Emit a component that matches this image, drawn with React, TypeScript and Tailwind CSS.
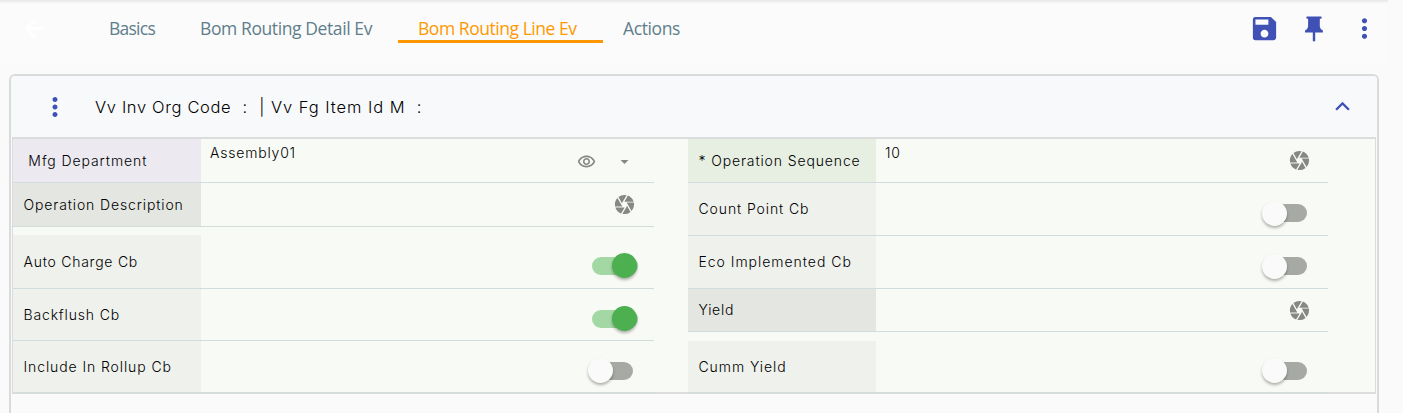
import React from "react";
import { MdArrowBack, MdArrowDropDown, MdCamera, MdKeyboardArrowUp, MdMoreVert, MdOutlineRemoveRedEye, MdSave } from "react-icons/md";

function Pin() {
  return (
    <svg width="18" height="26" viewBox="0 0 18 26" fill="#3f51b5">
      <path d="M2 0.5h14q.7 0 .7 1.1t-.7 1.2h-1.2v7.6q.3 2.9 3.1 4.2v2h-7.7v8.2l-1.2 1-1.2-1v-8.2H0v-2q2.8-1.3 3.1-4.2V2.8H2q-.7-.1-.7-1.2T2 .5z" />
    </svg>
  );
}

function Toggle({ on }: { on?: boolean }) {
  return (
    <div className={on ? "mt-[8px] mr-[17px] flex h-[26px] w-[45px] items-center justify-end" : "mt-[8px] mr-[21px] flex h-[26px] w-[45px] items-center"}>
      {on ? (
        <>
          <div className="-mr-[26px] h-[18px] w-[46px] shrink-0 rounded-full bg-[#a3d7a4]" />
          <div className="relative h-[25px] w-[25px] shrink-0 rounded-full bg-[#4caf50] shadow-[0_2px_3px_rgba(0,0,0,0.3)]" />
        </>
      ) : (
        <>
          <div className="relative h-[25px] w-[25px] shrink-0 rounded-full bg-[#fafafa] shadow-[0_2px_3px_rgba(0,0,0,0.3)]" />
          <div className="-ml-[13px] h-[18px] w-[33px] shrink-0 rounded-r-full bg-[#a7a9a5]" />
        </>
      )}
    </div>
  );
}

type RowProps = { label: string; size: string; tone: string; text: string; value?: string; children?: React.ReactNode };

function Row({ label, size, tone, text, value, children }: RowProps) {
  return (
    <div className={`flex border-b border-[#d3dcdc] ${size}`}>
      <div className={`flex w-[188px] shrink-0 items-center pl-[10.5px] ${tone}`}>
        <span className={`text-[14px] leading-5 whitespace-pre ${text}`}>{label}</span>
      </div>
      <div className="flex flex-1 items-center justify-between">
        <span className="self-start pt-1 pl-[9px] text-[14px] leading-5 tracking-[0.8px]">{value}</span>
        {children}
      </div>
    </div>
  );
}

const camera = <MdCamera size={23} className="mr-[17px] text-[#868884]" />;

export default function App() {
  return (
    <div className="h-[413px] overflow-hidden bg-[#fafafa] font-['Inter',sans-serif] font-light text-black">
      <header className="flex h-[64px] w-[1388px] items-center bg-[#fbfbfb] pb-[7px] font-['Open_Sans',sans-serif] font-normal shadow-[inset_0_3px_2px_-1px_#e9e9e9]">
        <MdArrowBack size={29} className="ml-[20px] text-white" />
        <nav className="ml-[60px] flex text-[17.5px] leading-6 text-[#607d8b]">
          <span className="w-[91px] tracking-[-0.75px]">Basics</span>
          <span className="w-[198px] tracking-[-0.4px] whitespace-nowrap">Bom Routing Detail Ev</span>
          <span className="-mb-[2px] w-[205px] border-b-[3px] border-[#ff9800] pl-[20px] tracking-[-0.45px] whitespace-nowrap text-[#ff9800]">Bom Routing Line Ev</span>
          <span className="pl-[20px] tracking-[-0.4px]">Actions</span>
        </nav>
        <div className="ml-auto flex items-center text-[#3f51b5]">
          <MdSave size={31} className="mr-[25px]" />
          <Pin />
          <MdMoreVert size={31} className="mr-[8px] ml-[26px]" />
        </div>
      </header>
      <main className="mt-[10px] ml-[9px] h-[350px] w-[1370px] rounded-t-[6px] border-x-2 border-t-2 border-[#d9dbdb]">
        <div className="flex h-[61px] items-center rounded-t-[4px] bg-[#f8f9fb]">
          <MdMoreVert size={30} className="ml-[29px] text-[#3f51b5]" />
          <h1 className="ml-[25px] text-[16.5px] leading-6 font-light whitespace-pre">
            <span className="tracking-[0.65px]">Vv Inv Org Code</span>
            <span className="tracking-[0.95px]">{"  :  | "}</span>
            <span className="tracking-[0.95px]">{"Vv Fg Item Id M  :"}</span>
          </h1>
          <MdKeyboardArrowUp size={29} className="mr-[20px] ml-auto text-[#3f51b5]" />
        </div>
        <div className="mr-[1px] ml-[1px] flex h-[257px] border-t-2 border-r border-b-2 border-l border-[#dadddb] bg-[#f8faf5]">
          <div className="w-[641px]">
            <Row label=" Mfg Department" size="h-[44px]" tone="bg-[#eceaf0]" text="tracking-[0.92px]" value="Assembly01">
              <div className="flex items-center pt-[2px] text-[#868884]">
                <MdOutlineRemoveRedEye size={19} className="mr-[19px]" />
                <MdArrowDropDown size={19} className="mr-[20px]" />
              </div>
            </Row>
            <Row label="Operation Description" size="h-[44px]" tone="bg-[#e4e6e1]" text="tracking-[0.87px]"><MdCamera size={23} className="mr-[18px] text-[#868884]" /></Row>
            <Row label="Auto Charge Cb" size="mt-[8px] h-[54px]" tone="bg-[#eff1ec]" text="tracking-[0.75px]"><Toggle on /></Row>
            <Row label="Backflush Cb" size="h-[52px]" tone="bg-[#eff1ec]" text="tracking-[0.84px]"><Toggle on /></Row>
            <Row label="Include In Rollup Cb" size="h-[52px]" tone="bg-[#eff1ec]" text="tracking-[0.9px]"><Toggle /></Row>
          </div>
          <div className="ml-[34px] w-[640px]">
            <Row label="* Operation Sequence" size="h-[44px]" tone="bg-[#e7efe3]" text="tracking-[0.87px]" value="10">{camera}</Row>
            <Row label="Count Point Cb" size="h-[53px]" tone="bg-[#eff1ec]" text="tracking-[0.9px]"><Toggle /></Row>
            <Row label="Eco Implemented Cb" size="h-[53px]" tone="bg-[#eff1ec]" text="tracking-[0.97px]"><Toggle /></Row>
            <Row label="Yield" size="h-[43px]" tone="bg-[#e4e6e1]" text="tracking-[0.7px]">{camera}</Row>
            <Row label="Cumm Yield" size="mt-[9px] h-[52px]" tone="bg-[#eff1ec]" text="tracking-[0.93px]"><Toggle /></Row>
          </div>
        </div>
      </main>
    </div>
  );
}
